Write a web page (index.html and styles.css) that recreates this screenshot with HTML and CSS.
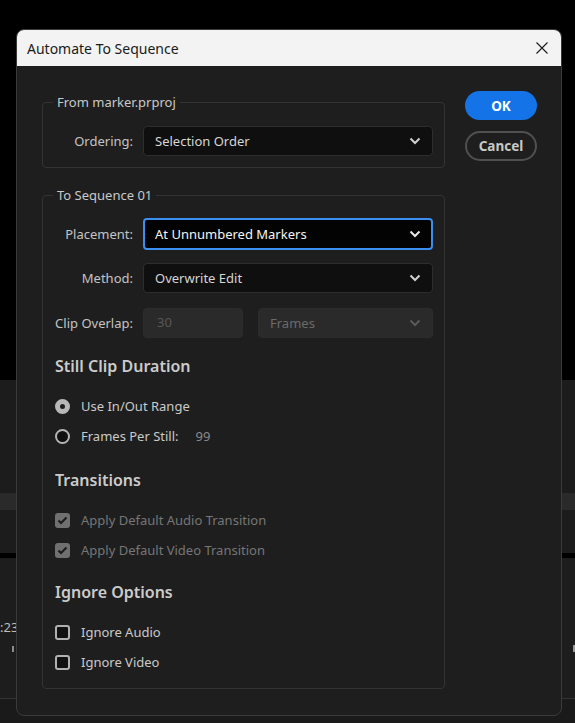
FILE: index.html
```html
<!DOCTYPE html>
<html>
<head>
<meta charset="utf-8">
<link rel="stylesheet" href="styles.css">
</head>
<body>
<div class="app">
  <div class="bg-black"></div>
  <div class="bg-panel-a"></div>
  <div class="bg-band"></div>
  <div class="bg-panel-b"></div>
  <div class="bg-line-black"></div>
  <div class="bg-panel-c">
    <span class="timecode">:23</span>
    <span class="tick tick-left"></span>
    <span class="tick tick-right"></span>
  </div>
  <div class="bg-panel-d"></div>

  <div class="dialog">
    <div class="titlebar">
      <span class="title">Automate To Sequence</span>
      <svg class="close" width="12" height="12" viewBox="0 0 12 12"><path d="M0.5 0.5 L11.5 11.5 M11.5 0.5 L0.5 11.5" stroke="#1a1a1a" stroke-width="1.1" fill="none"/></svg>
    </div>
    <div class="body">
      <div class="main">
        <fieldset class="group group-from">
          <legend>From marker.prproj</legend>
          <div class="row">
            <span class="label">Ordering:</span>
            <div class="select"><span>Selection Order</span><svg class="chev" width="12" height="8" viewBox="0 0 12 8"><path d="M1.5 1.5 L6 6 L10.5 1.5" stroke="#d0d0d0" stroke-width="2" fill="none"/></svg></div>
          </div>
        </fieldset>

        <fieldset class="group group-to">
          <legend>To Sequence 01</legend>
          <div class="row">
            <span class="label">Placement:</span>
            <div class="select focused"><span>At Unnumbered Markers</span><svg class="chev" width="12" height="8" viewBox="0 0 12 8"><path d="M1.5 1.5 L6 6 L10.5 1.5" stroke="#e8e8e8" stroke-width="2" fill="none"/></svg></div>
          </div>
          <div class="row row-method">
            <span class="label">Method:</span>
            <div class="select"><span>Overwrite Edit</span><svg class="chev" width="12" height="8" viewBox="0 0 12 8"><path d="M1.5 1.5 L6 6 L10.5 1.5" stroke="#d0d0d0" stroke-width="2" fill="none"/></svg></div>
          </div>
          <div class="row row-overlap">
            <span class="label">Clip Overlap:</span>
            <div class="overlap">
              <div class="input disabled">30</div>
              <div class="select disabled small"><span>Frames</span><svg class="chev" width="12" height="8" viewBox="0 0 12 8"><path d="M1.5 1.5 L6 6 L10.5 1.5" stroke="#5a5a5a" stroke-width="2" fill="none"/></svg></div>
            </div>
          </div>

          <div class="heading h-still">Still Clip Duration</div>
          <div class="opts">
            <div class="opt"><span class="radio checked"></span><span class="opt-label">Use In/Out Range</span></div>
            <div class="opt"><span class="radio"></span><span class="opt-label">Frames Per Still:</span><span class="num">99</span></div>
          </div>

          <div class="heading h-trans">Transitions</div>
          <div class="opts">
            <div class="opt dim"><span class="check checked-dis"><svg width="11" height="9" viewBox="0 0 11 9"><path d="M1.5 4.5 L4 7 L9.5 1.5" stroke="#1b1b1b" stroke-width="2" fill="none"/></svg></span><span class="opt-label">Apply Default Audio Transition</span></div>
            <div class="opt dim"><span class="check checked-dis"><svg width="11" height="9" viewBox="0 0 11 9"><path d="M1.5 4.5 L4 7 L9.5 1.5" stroke="#1b1b1b" stroke-width="2" fill="none"/></svg></span><span class="opt-label">Apply Default Video Transition</span></div>
          </div>

          <div class="heading h-ignore">Ignore Options</div>
          <div class="opts">
            <div class="opt"><span class="check"></span><span class="opt-label">Ignore Audio</span></div>
            <div class="opt"><span class="check"></span><span class="opt-label">Ignore Video</span></div>
          </div>
        </fieldset>
      </div>
      <div class="buttons">
        <div class="btn btn-ok">OK</div>
        <div class="btn btn-cancel">Cancel</div>
      </div>
    </div>
  </div>
</div>
</body>
</html>
```

FILE: styles.css
```css
html, body {
  margin: 0;
  padding: 0;
  background: #000;
}
body {
  width: 575px;
  height: 723px;
  overflow: hidden;
  font-family: "Noto Sans", "Open Sans", sans-serif;
  font-size: 13px;
  color: #cdcdcd;
}
.app {
  position: relative;
  width: 575px;
  height: 723px;
  overflow: hidden;
}
.bg-black { height: 380px; background: #000; }
.bg-panel-a { height: 113px; background: #1c1c1c; }
.bg-band { height: 17px; background: #2a2a2a; }
.bg-panel-b { height: 43px; background: #1c1c1c; }
.bg-line-black { height: 5px; background: #000; }
.bg-panel-c {
  position: relative;
  height: 140px;
  background: #1d1d1d;
  border-bottom: 1px solid #333;
}
.bg-panel-d { height: 25px; background: #1a1a1a; }
.timecode {
  position: absolute;
  left: 0;
  top: 60px;
  font-size: 13px;
  color: #bdbdbd;
  white-space: nowrap;
}
.tick {
  position: absolute;
  width: 2px;
  height: 6px;
  background: #8a8a8a;
  top: 88px;
}
.tick-left { left: 12px; }
.tick-right { left: 573px; top: 87px; height: 7px; background: #9a9a9a; }

.dialog {
  position: absolute;
  left: 16px;
  top: 29px;
  width: 544px;
  height: 685px;
  background: #1e1e1e;
  border: 1px solid #3a3a3a;
  border-radius: 8px;
  overflow: hidden;
}
.titlebar {
  height: 36px;
  background: #f3f3f3;
  display: flex;
  align-items: center;
  justify-content: space-between;
  padding: 0 13px 0 10px;
}
.title {
  font-size: 14px;
  color: #1a1a1a;
}
.close { display: block; }

.body {
  display: flex;
  padding: 28px 0 0 25px;
  gap: 20px;
}
.main { width: 403px; }

.group {
  margin: 0;
  padding: 0;
  border: 1px solid #333;
  border-radius: 4px;
  min-width: 0;
}
.group legend {
  margin-left: 10px;
  padding: 0 4px;
  line-height: 16px;
  font-size: 13px;
  color: #c9c9c9;
}
.group-from { padding: 16px 11px 11px 0; }
.group-to { margin-top: 19px; padding: 16px 11px 11px 0; }

.row {
  display: flex;
  align-items: center;
}
.row-method { margin-top: 14px; }
.row-overlap { margin-top: 15px; }
.label {
  width: 90px;
  text-align: right;
  margin-right: 10px;
  color: #c4c4c4;
  flex: none;
}
.select {
  flex: 1;
  height: 30px;
  box-sizing: border-box;
  background: #0f0f0f;
  border: 1px solid #2d2d2d;
  border-radius: 4px;
  display: flex;
  align-items: center;
  justify-content: space-between;
  padding: 0 11px 0 11px;
  color: #d6d6d6;
}
.select.focused {
  background: #030303;
  border: 2px solid #3a8ff0;
  padding: 0 10px 0 10px;
  color: #f4f4f4;
  height: 32px;
  margin: -1px 0;
}
.chev { display: block; }
.overlap {
  flex: 1;
  display: flex;
  gap: 15px;
}
.input {
  width: 100px;
  height: 30px;
  box-sizing: border-box;
  border-radius: 4px;
  padding: 0 13px;
  line-height: 26px;
  flex: none;
}
.disabled {
  background: #2a2a2a;
  border: 1px solid #2c2c2c;
  color: #585858;
}
.select.disabled { color: #6a6a6a; }

.heading {
  margin-left: 12px;
  font-size: 16px;
  font-weight: 600;
  line-height: 22px;
  color: #cbcbcb;
}
.h-still { margin-top: 17px; }
.h-trans { margin-top: 18px; }
.h-ignore { margin-top: 16px; }

.opts { margin-top: 14px; margin-left: 12px; }
.opt {
  height: 30px;
  display: flex;
  align-items: center;
}
.opt-label { margin-left: 11px; color: #cacaca; }
.opt.dim .opt-label { color: #767676; }
.num { margin-left: 17px; color: #8a8a8a; }

.radio {
  width: 15px;
  height: 15px;
  box-sizing: border-box;
  border-radius: 50%;
  border: 2px solid #b4b4b4;
  background: #101010;
  flex: none;
}
.radio.checked {
  border: 5px solid #b8b8b8;
  background: #1e1e1e;
}
.check {
  width: 15px;
  height: 15px;
  box-sizing: border-box;
  border-radius: 3px;
  border: 2px solid #b0b0b0;
  background: #101010;
  flex: none;
  display: flex;
  align-items: center;
  justify-content: center;
}
.check.checked-dis {
  border: none;
  background: #707070;
}
.check svg { display: block; }

.buttons {
  width: 72px;
  margin-top: -3px;
  display: flex;
  flex-direction: column;
  gap: 11px;
}
.btn {
  height: 29px;
  box-sizing: border-box;
  border-radius: 15px;
  display: flex;
  align-items: center;
  justify-content: center;
  font-weight: 700;
  font-size: 13.5px;
}
.btn-ok {
  background: #1473e6;
  color: #fff;
}
.btn-cancel {
  height: 30px;
  border: 2px solid #505050;
  color: #c8c8c8;
}
```
